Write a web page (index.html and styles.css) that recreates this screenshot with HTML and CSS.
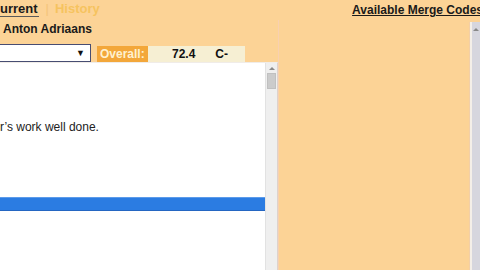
FILE: index.html
```html
<!DOCTYPE html>
<html>
<head>
<meta charset="utf-8">
<link rel="stylesheet" href="styles.css">
</head>
<body>
<div class="page">
  <div class="topbar">
    <div class="tabs"><span class="tab active">urrent</span><span class="sep">|</span><span class="tab">History</span></div>
    <a class="merge">Available Merge Codes</a>
  </div>
  <div class="main">
    <div class="left">
      <div class="name">Anton Adriaans</div>
      <div class="grade-row">
        <div class="select"><span class="arrow">▼</span></div>
        <div class="overall">Overall:</div>
        <div class="values"><span class="score">72.4</span><span class="letter">C-</span></div>
      </div>
      <div class="panel">
        <div class="list">
          <div class="comment">r’s work well done.</div>
          <div class="selected"></div>
        </div>
        <div class="vscroll"><div class="up"></div><div class="thumb"></div></div>
      </div>
    </div>
    <div class="right">
      <div class="rscroll"><div class="up"></div></div>
    </div>
  </div>
</div>
</body>
</html>
```

FILE: styles.css
```css
html, body {
  margin: 0;
  padding: 0;
  background: #fcd396;
  overflow: hidden;
}
.page {
  width: 480px;
  height: 270px;
  display: flex;
  flex-direction: column;
  font-family: "Liberation Sans", Arial, sans-serif;
  color: #1a1a1a;
}
.topbar {
  height: 20px;
  display: flex;
  justify-content: space-between;
  align-items: flex-start;
}
.tabs {
  display: flex;
  align-items: flex-start;
  padding-top: 1px;
}
.tab {
  font-size: 13px;
  font-weight: bold;
  line-height: 15px;
  color: #f6c35f;
}
.tab.active {
  color: #1a1a1a;
  border-bottom: 1px solid #5a5a5a;
  padding-right: 1px;
}
.sep {
  font-size: 13px;
  line-height: 15px;
  color: #f3c47a;
  margin: 0 6px 0 7px;
}
.merge {
  font-size: 12px;
  font-weight: bold;
  line-height: 14px;
  margin-top: 3px;
  margin-right: -3px;
  text-decoration: underline;
  color: #1a1a1a;
  white-space: nowrap;
}
.main {
  flex: 1;
  display: flex;
  min-height: 0;
}
.left {
  width: 278px;
  display: flex;
  flex-direction: column;
}
.name {
  font-size: 12px;
  font-weight: bold;
  line-height: 14px;
  padding: 2px 0 0 3px;
  height: 20px;
  box-sizing: border-box;
}
.grade-row {
  display: flex;
  align-items: flex-end;
  height: 20px;
  margin-top: 2px;
}
.select {
  width: 91px;
  height: 18px;
  box-sizing: border-box;
  background: #fff;
  border: 1px solid #474d72;
  border-left: none;
  display: flex;
  justify-content: flex-end;
  align-items: center;
  padding-right: 5px;
}
.arrow {
  font-size: 9px;
  line-height: 10px;
  color: #111;
}
.overall {
  margin-left: 6px;
  width: 51px;
  height: 16px;
  background: #f3a73a;
  color: #fff1cf;
  font-size: 12px;
  font-weight: bold;
  line-height: 16px;
  padding-left: 3px;
  box-sizing: border-box;
}
.values {
  width: 97px;
  height: 16px;
  background: #f6efd3;
  font-size: 12px;
  font-weight: bold;
  line-height: 16px;
  display: flex;
  color: #111;
}
.score {
  margin-left: 24px;
}
.letter {
  margin-left: 20px;
}
.panel {
  flex: 1;
  display: flex;
  background: #fff;
  border-right: 1px solid #ddd3cc;
  border-top: 1px solid #f0ece8;
  min-height: 0;
}
.list {
  flex: 1;
  display: flex;
  flex-direction: column;
}
.comment {
  margin-top: 57px;
  font-size: 12px;
  line-height: 14px;
  color: #222;
  white-space: nowrap;
}
.selected {
  margin-top: 63px;
  height: 14px;
  background: #2b7ce2;
  border-top: 1px solid #5c9bea;
  border-bottom: 1px solid #2466c2;
  box-sizing: border-box;
}
.vscroll {
  width: 11px;
  background: #efefef;
  border-left: 1px solid #e2e2e2;
  display: flex;
  flex-direction: column;
  align-items: center;
}
.up {
  margin-top: 4px;
  width: 0;
  height: 0;
  border-left: 3px solid transparent;
  border-right: 3px solid transparent;
  border-bottom: 3px solid #8a8a8a;
}
.thumb {
  margin-top: 3px;
  width: 9px;
  height: 16px;
  background: #cbcbcb;
  border: 1px solid #c0c0c0;
  box-sizing: border-box;
}
.right {
  flex: 1;
  display: flex;
  justify-content: flex-end;
  padding-top: 2px;
  border-left: 1px solid #f8d0b0;
}
.rscroll {
  width: 8px;
  background: #d6d6de;
  border-left: 2px solid #f4efe8;
  box-shadow: -1px 0 0 #f3cfa6;
  display: flex;
  flex-direction: column;
  align-items: center;
}
.rscroll .up {
  margin-top: 6px;
  border-bottom-color: #888;
}
```
